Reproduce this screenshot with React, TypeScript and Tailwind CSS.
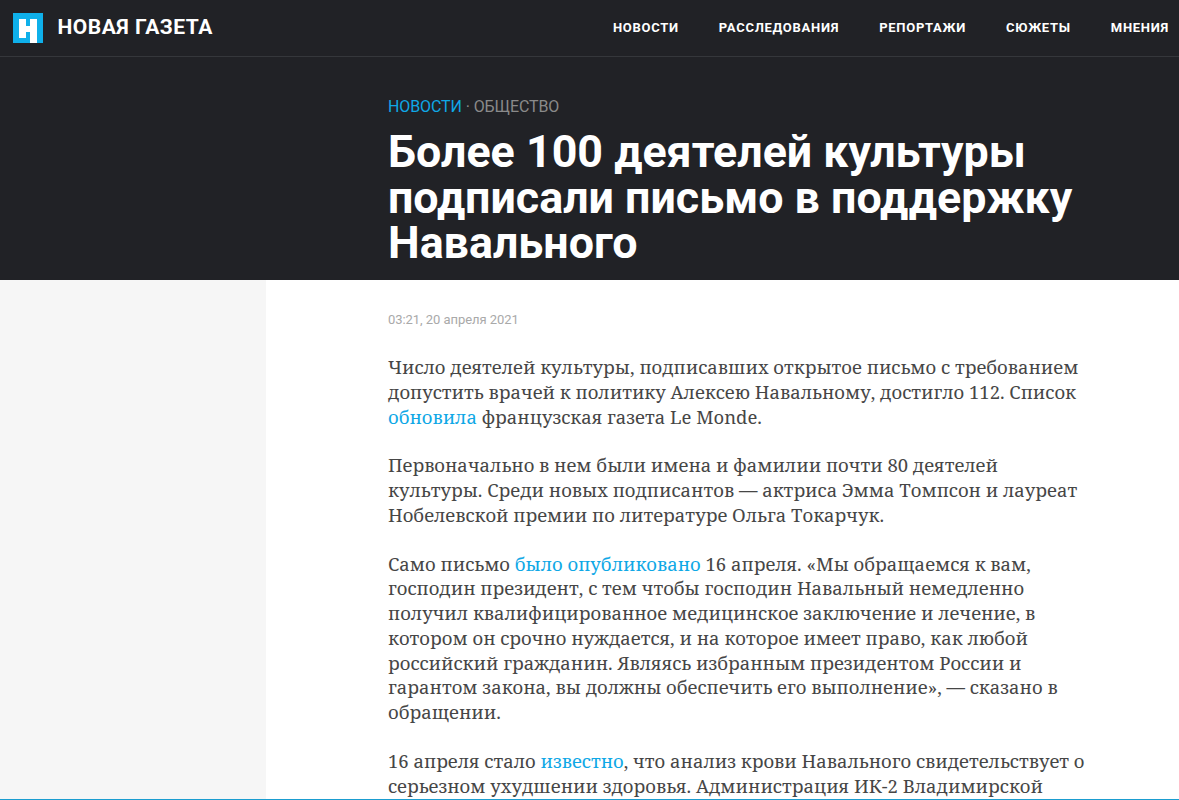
const navItems = ["Новости", "Расследования", "Репортажи", "Сюжеты", "Мнения"];

function Logo() {
  return (
    <svg width="30" height="30" viewBox="0 0 30 30" className="shrink-0">
      <rect width="30" height="30" fill="#0fb0ea" />
      <path d="M6 6h7v7h4V6h7v24h-7V19h-4v6H6z" fill="#fff" />
    </svg>
  );
}

function A({ children }: { children: React.ReactNode }) {
  return <a className="text-[#0fa8e6]">{children}</a>;
}

export default function App() {
  return (
    <div className="h-[800px] w-[1179px] overflow-hidden bg-white font-['Roboto',sans-serif]">
      {/* Header */}
      <header className="flex h-[57px] items-center justify-between border-b border-[#35373b] bg-[#212226] pl-[13px] pr-[10px]">
        <div className="flex items-center gap-[14.5px]">
          <Logo />
          <span className="text-[21px] font-bold tracking-[0.5px] text-white uppercase">Новая газета</span>
        </div>
        <nav className="flex gap-10">
          {navItems.map((item) => (
            <a key={item} className="text-[13px] font-bold tracking-[0.72px] text-white uppercase">
              {item}
            </a>
          ))}
        </nav>
      </header>

      {/* Title */}
      <section className="h-[223px] bg-[#212226] pl-[388px] pt-[40px]">
        <div className="text-base leading-[20px] tracking-[-0.1px] uppercase">
          <span className="text-[#0fa8e6]">Новости</span>
          <span className="text-[#8a8a8a]"> · Общество</span>
        </div>
        <h1 className="mt-[12px] text-[44.8px] leading-[45.5px] font-bold text-white">
          Более 100 деятелей культуры
          <br />
          подписали письмо в поддержку
          <br />
          Навального
        </h1>
      </section>

      {/* Body */}
      <div className="flex h-[520px] border-b border-[#1b9dd0]">
        <aside className="w-[266px] shrink-0 bg-[#f6f6f6]" />
        <main className="pl-[122px] pt-[32px]">
          <div className="text-[13px] leading-[16px] tracking-[-0.05px] text-[#a9a9a9]">03:21, 20 апреля 2021</div>
          <article className="mt-[27px] flex w-[720px] flex-col gap-[24px] font-['Noto_Serif','DejaVu_Serif',serif] text-[18.47px] leading-[24.75px] text-[#464646]">
            <p>
              Число деятелей культуры, подписавших открытое письмо с требованием
              <br />
              допустить врачей к политику Алексею Навальному, достигло 112. Список
              <br />
              <A>обновила</A> французская газета Le Monde.
            </p>
            <p>
              Первоначально в нем были имена и фамилии почти 80 деятелей
              <br />
              культуры. Среди новых подписантов — актриса Эмма Томпсон и лауреат
              <br />
              Нобелевской премии по литературе Ольга Токарчук.
            </p>
            <p>
              Само письмо <A>было опубликовано</A> 16 апреля. «Мы обращаемся к вам,
              <br />
              господин президент, с тем чтобы господин Навальный немедленно
              <br />
              получил квалифицированное медицинское заключение и лечение, в
              <br />
              котором он срочно нуждается, и на которое имеет право, как любой
              <br />
              российский гражданин. Являясь избранным президентом России и
              <br />
              гарантом закона, вы должны обеспечить его выполнение», — сказано в
              <br />
              обращении.
            </p>
            <p>
              16 апреля стало <A>известно</A>, что анализ крови Навального свидетельствует о
              <br />
              серьезном ухудшении здоровья. Администрация ИК-2 Владимирской
            </p>
          </article>
        </main>
      </div>
    </div>
  );
}
